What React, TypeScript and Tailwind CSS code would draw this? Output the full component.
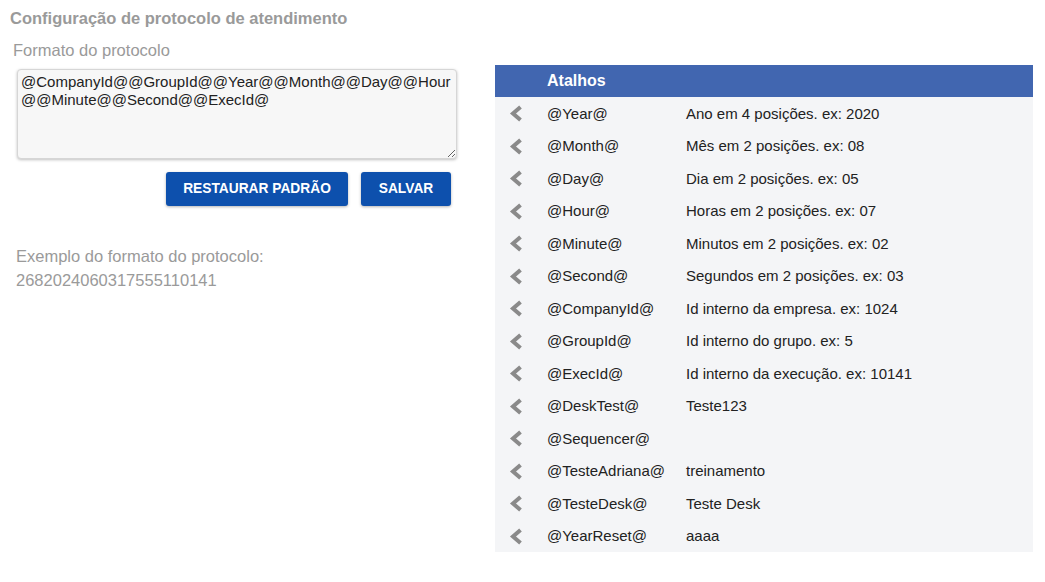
import React from "react";

const rows: [string, string][] = [
  ["@Year@", "Ano em 4 posições. ex: 2020"],
  ["@Month@", "Mês em 2 posições. ex: 08"],
  ["@Day@", "Dia em 2 posições. ex: 05"],
  ["@Hour@", "Horas em 2 posições. ex: 07"],
  ["@Minute@", "Minutos em 2 posições. ex: 02"],
  ["@Second@", "Segundos em 2 posições. ex: 03"],
  ["@CompanyId@", "Id interno da empresa. ex: 1024"],
  ["@GroupId@", "Id interno do grupo. ex: 5"],
  ["@ExecId@", "Id interno da execução. ex: 10141"],
  ["@DeskTest@", "Teste123"],
  ["@Sequencer@", ""],
  ["@TesteAdriana@", "treinamento"],
  ["@TesteDesk@", "Teste Desk"],
  ["@YearReset@", "aaaa"],
];

function Chevron() {
  return (
    <svg width="14" height="17" viewBox="0 0 14 17" className="block">
      <polyline
        points="11.5,2 4,8.5 11.5,15"
        fill="none"
        stroke="#8a8a8a"
        strokeWidth="4"
        strokeLinejoin="miter"
        strokeLinecap="butt"
      />
    </svg>
  );
}

export default function App() {
  return (
    <div
      className="w-[1045px] h-[582px] bg-white px-[10px] pt-[9px]"
      style={{ fontFamily: '"Liberation Sans", Arial, sans-serif' }}
    >
      <div className="text-[16.5px] leading-[18px] font-bold text-[#9a9a9a]">
        Configuração de protocolo de atendimento
      </div>
      <div className="flex items-start">
        <div className="w-[485px] shrink-0">
          <div className="mt-[14px] ml-[3px] text-[16.5px] leading-[18px] text-[#9a9a9a]">
            Formato do protocolo
          </div>
          <textarea
            className="mt-[10px] ml-[7px] block w-[440px] h-[90px] rounded-[4px] border border-[#d6d6d6] bg-[#f7f7f7] px-[3px] py-[3px] text-[15px] leading-[18px] text-[#222] shadow-[0_1px_3px_rgba(0,0,0,0.25)] outline-none resize"
            defaultValue="@CompanyId@@GroupId@@Year@@Month@@Day@@Hour@@Minute@@Second@@ExecId@"
          />
          <div className="mt-[13px] flex justify-end gap-[13px] w-[441px]">
            <button className="h-[34px] w-[182px] rounded-[3px] bg-[#0d50ad] text-white text-[13.75px] font-bold shadow-[0_1px_3px_rgba(0,0,0,0.3)]">
              RESTAURAR PADRÃO
            </button>
            <button className="h-[34px] w-[90px] rounded-[3px] bg-[#0d50ad] text-white text-[13.75px] font-bold shadow-[0_1px_3px_rgba(0,0,0,0.3)]">
              SALVAR
            </button>
          </div>
          <div className="mt-[38px] ml-[6px] text-[16.5px] leading-[24px] text-[#9a9a9a]">
            <div>Exemplo do formato do protocolo:</div>
            <div>26820240603175551​10141</div>
          </div>
        </div>
        <div className="mt-[38px] w-[538px] bg-[#f4f5f7]">
          <div className="h-[32px] bg-[#4166b0] flex items-center pl-[52px] text-white font-bold text-[16px]">
            Atalhos
          </div>
          {rows.map(([k, d]) => (
            <div key={k} className="h-[32.5px] flex items-center pt-[1px] text-[15px] text-[#222]">
              <div className="w-[52px] flex justify-center pr-[10px]">
                <Chevron />
              </div>
              <div className="w-[139px]">{k}</div>
              <div>{d}</div>
            </div>
          ))}
        </div>
      </div>
    </div>
  );
}
